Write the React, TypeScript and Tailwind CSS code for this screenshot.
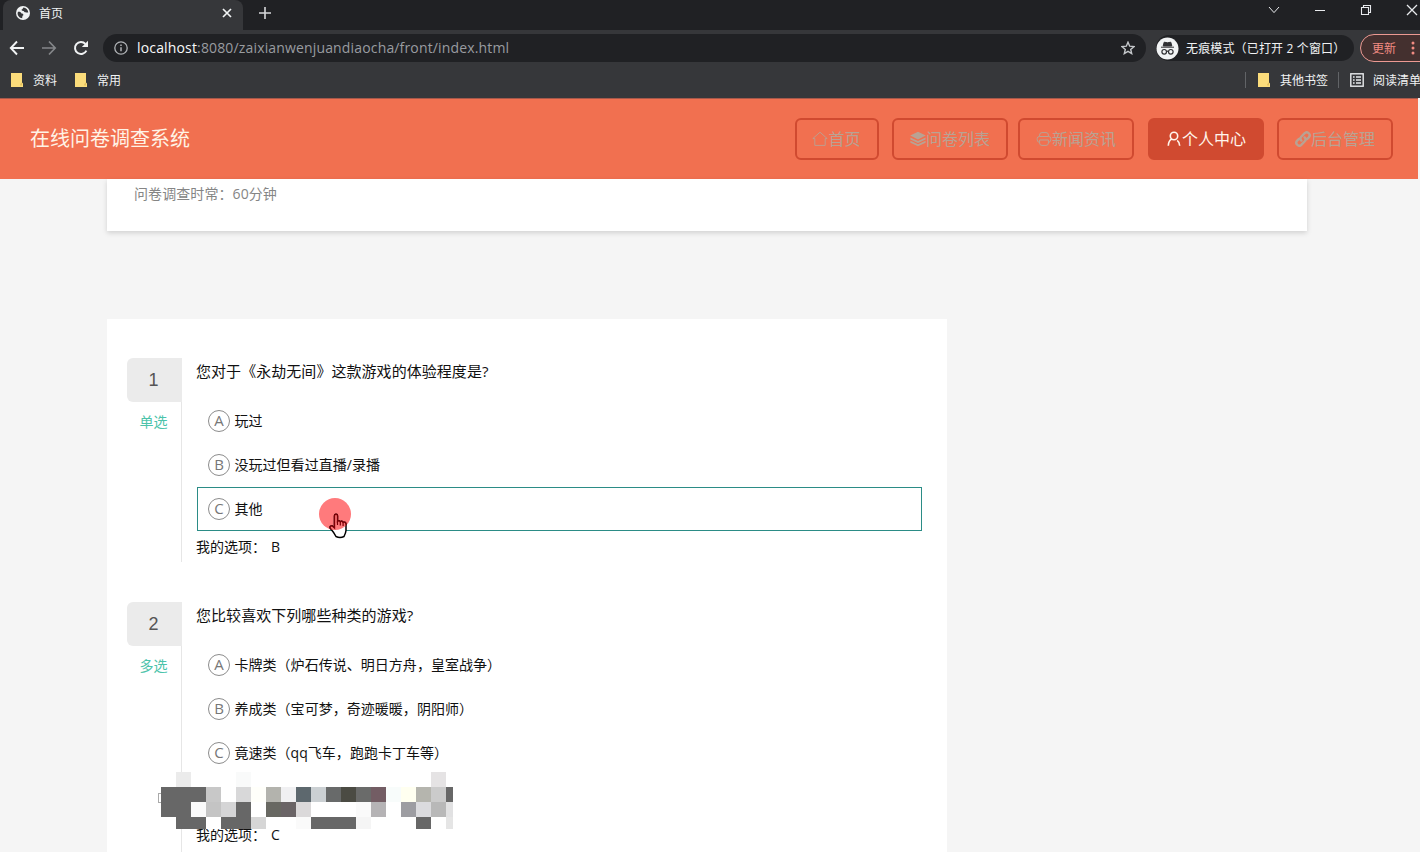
import React from "react";

const MOSAIC: string[][] = [
  ["", "#ebebeb", "", "", "", "#f9fafa", "", "", "", "", "", "", "", "", "", "", "", "", "#e5e3e4", ""],
  ["#676767", "#676767", "#676767", "#c8c8c8", "#ffffff", "#d8d8d9", "#fffffa", "#b3b3ad", "#f0f0f2", "#5d686e", "#cbd0d3", "#686a6a", "#4b4b43", "#6a6b6a", "#735d64", "#f8fcfb", "#fffff0", "#b5b5ae", "#cbcbcb", "#676767"],
  ["#676767", "#676767", "#fafafa", "#c4c4c4", "#d5d5d6", "#676767", "#ffffff", "#686862", "#6a6466", "#dbd9da", "#ffffff", "#ffffff", "#ffffff", "#fafafa", "#b5b3b5", "#ffffff", "#9d9da2", "#dbdbde", "#b8b8b8", "#e1e1e2"],
  ["", "#676767", "#676767", "#ffffff", "#676767", "#676767", "#d6d6d6", "", "", "#fafafa", "#676767", "#676767", "#676767", "#f5f5f5", "", "", "", "#676767", "", "#e5e5e5"],
];

const Folder = () => (
  <svg width="12" height="14" viewBox="0 0 12 14" className="shrink-0">
    <path d="M0 0H11V9.5L12 10.5V14H0Z" fill="#fbdc7b" />
    <path d="M9.2 11L11 9.5V12.5H9.2Z" fill="#e3bf5c" />
  </svg>
);

const Globe = () => (
  <svg width="14" height="14" viewBox="0 0 14 14" className="shrink-0">
    <circle cx="7" cy="7" r="7" fill="#f1f3f4" />
    <path d="M2 5.8C4 5.6 5.1 6.3 5.4 7.6C6.8 7.6 7.5 8.2 7.4 9.3C6.4 9.6 6.3 10.6 6.2 12.3C3.4 12 1.5 9.6 1.6 7Z" fill="#36373a" />
    <path d="M7.4 1.6C6.7 2.6 6.7 3.2 5.6 3.6C5.4 4.6 6.2 5 7.5 4.9C8.1 5.2 8.2 6.3 9.4 6.3C10.2 6.4 10.7 6.8 12.3 6.4C12 3.7 10 1.7 7.4 1.6Z" fill="#36373a" />
  </svg>
);

const HomeIcon = () => (
  <svg width="16" height="16" viewBox="0 0 16 16" fill="none" stroke="currentColor" strokeWidth="0.9">
    <path d="M0.8 7.6L8 1.2L15.2 7.6H13.2V14.4H2.8V7.6Z" />
  </svg>
);
const LayersIcon = () => (
  <svg width="16" height="16" viewBox="0 0 16 16" fill="currentColor">
    <path d="M8 0.8L15.8 4.6L8 8.4L0.2 4.6Z" />
    <path d="M0.4 6.4L8 10L15.6 6.4V8.4L8 12L0.4 8.4Z" />
    <path d="M0.4 9.8L8 13.2L15.6 9.8V11.8L8 15.2L0.4 11.8Z" />
  </svg>
);
const NewsIcon = () => (
  <svg width="16" height="16" viewBox="0 0 16 16" fill="none" stroke="currentColor" strokeWidth="1">
    <path d="M3.6 5.5V4Q3.6 1.6 6 1.6H10Q12.4 1.6 12.4 4V5.5M3.6 11.4Q1.2 11.2 1.2 8.8V7.6Q1.2 5.5 3.4 5.5H12.6Q14.8 5.5 14.8 7.6V8.8Q14.8 11.2 12.4 11.4M3.6 9H12.4V12Q12.4 14.4 10 14.4H6Q3.6 14.4 3.6 12Z" />
  </svg>
);
const UserIcon = () => (
  <svg width="16" height="16" viewBox="0 0 16 16" fill="none" stroke="currentColor" strokeWidth="1.6">
    <circle cx="8" cy="5" r="3.7" />
    <path d="M5.9 8.1C3.8 9 2.5 11 2.3 14.7M11.2 9.3C12.8 10.4 13.6 12 13.7 14.7" />
  </svg>
);
const LinkIcon = () => (
  <svg width="16" height="16" viewBox="0 0 16 16" fill="none" stroke="currentColor" strokeWidth="2.4" strokeLinecap="round">
    <path d="M6.4 9.6A2.9 2.9 0 0 1 6.4 5.5L9.7 2.2A2.9 2.9 0 0 1 13.8 6.3L12 8.1M9.6 6.4A2.9 2.9 0 0 1 9.6 10.5L6.3 13.8A2.9 2.9 0 0 1 2.2 9.7L4 7.9" />
  </svg>
);

function NavItem({ icon, label, className }: { icon: React.ReactNode; label: string; className: string }) {
  return (
    <a className={"flex h-[42px] items-center justify-center rounded-[6px] border-2 border-[#d04a30] text-[16px] leading-[22px] " + className}>
      {icon}
      <span>{label}</span>
    </a>
  );
}

function Option({ letter, text, active }: { letter: string; text: string; active?: boolean }) {
  return (
    <div className={"flex h-11 items-center border pl-[10px] " + (active ? "border-[#2b8c86]" : "border-transparent")}>
      <span className="flex size-[22px] items-center justify-center rounded-full border border-[#8c8c8c] pb-[2px] text-[15px] leading-[18px] text-[#777]">
        {letter}
      </span>
      <span className="ml-[4.5px] text-[14px] leading-5 tracking-[0.03px] whitespace-nowrap text-[#111]">{text}</span>
    </div>
  );
}

function Question({ no, kind, title, children, className }: { no: number; kind: string; title: string; children: React.ReactNode; className: string }) {
  return (
    <section className={"flex " + className}>
      <div className="w-[55px] shrink-0 border-r border-[#e6e6e6] text-center">
        <div className="-mr-px flex h-11 items-center justify-center rounded-l-[6px] bg-[#ebebeb] pr-[2px] font-['Liberation_Sans','Noto_Sans_CJK_SC',sans-serif] text-[18px] text-[#555]">{no}</div>
        <div className="mt-[10px] pr-px text-[14px] leading-5 text-[#4cc3aa]">{kind}</div>
      </div>
      <div className="ml-[15px] w-[725px]">
        <h2 className="-ml-px h-[41px] pt-[2px] text-[15px] leading-[22px] tracking-[0.05px] whitespace-nowrap text-[#111]">{title}</h2>
        {children}
      </div>
    </section>
  );
}

export default function App() {
  return (
    <div className="relative flex h-[852px] w-[1420px] flex-col overflow-hidden bg-[#f5f5f5] font-['Open_Sans','Noto_Sans_CJK_SC',sans-serif]">
      <div className="flex h-[98px] shrink-0 flex-col bg-[#36373a]">
        <div className="flex h-[30px] shrink-0 bg-[#202124]">
          <div className="ml-[3px] flex w-[240px] items-center rounded-t-[8px] bg-[#36373a] pb-1 pl-[13px]">
            <Globe />
            <span className="mt-px ml-[9px] text-[12px] leading-4 text-[#f1f3f4]">首页</span>
            <svg className="mr-[11px] ml-auto" width="10" height="10" viewBox="0 0 10 10" stroke="#f1f3f4" strokeWidth="1.7"><path d="M1 1L9 9M9 1L1 9" /></svg>
          </div>
          <svg className="mt-[7px] ml-4" width="12" height="12" viewBox="0 0 12 12" stroke="#d6d8da" strokeWidth="1.6"><path d="M6 0V12M0 6H12" /></svg>
          <div className="mr-px ml-auto flex h-5 items-center text-[#e8eaed]">
            <svg width="12" height="12" viewBox="0 0 12 12" fill="none" stroke="currentColor" strokeWidth="1"><path d="M1 3L6 8.6L11 3" /></svg>
            <svg className="ml-[34px]" width="12" height="12" viewBox="0 0 12 12" stroke="currentColor"><path d="M1 6.5H11" /></svg>
            <svg className="ml-[34px]" width="12" height="12" viewBox="0 0 12 12" fill="none" stroke="currentColor" strokeWidth="1.1"><path d="M1.5 3.5H8.5V10.5H1.5ZM3.5 3.5V1.5H10.5V8.5H8.5" /></svg>
            <svg className="ml-[34px]" width="13" height="12" viewBox="0 0 13 12" stroke="currentColor" strokeWidth="1.3"><path d="M1 1L11 11M11 1L1 11" /></svg>
          </div>
        </div>
        <div className="flex h-9 shrink-0 items-center">
          <svg className="ml-[9px] shrink-0" width="16" height="16" viewBox="0 0 16 16" fill="none" stroke="#f1f3f4" strokeWidth="1.9"><path d="M15 8H2M8 1.5L1.8 8L8 14.5" /></svg>
          <svg className="ml-4 shrink-0" width="16" height="16" viewBox="0 0 16 16" fill="none" stroke="#85878a" strokeWidth="1.7"><path d="M1 8H14M8 1.5L14.2 8L8 14.5" /></svg>
          <svg className="ml-4 shrink-0" width="16" height="16" viewBox="0 0 16 16" fill="none" stroke="#f1f3f4" strokeWidth="2"><path d="M13.4 10.6A6 6 0 1 1 12.4 3.9" /><path d="M15 0.8V7H8.8Z" fill="#f1f3f4" stroke="none" /></svg>
          <div className="ml-[14px] flex h-7 w-[1043px] shrink-0 items-center rounded-full bg-[#202124] pl-[11px]">
            <svg width="14" height="14" viewBox="0 0 14 14" fill="none" stroke="#b0b3b6" strokeWidth="1.3"><circle cx="7" cy="7" r="6.2" /><path d="M7 6.2V10.3M7 3.5V5" strokeWidth="1.5" /></svg>
            <span className="ml-[9px] inline-block text-[14px] leading-5 tracking-[0.155px] text-[#999ca0]"><span className="text-[#f8f9fa]">localhost</span>:8080/zaixianwenjuandiaocha/front/index.html</span>
            <svg className="mr-[11px] ml-auto" width="14" height="14" viewBox="0 0 14 14" fill="none" stroke="#c5c8cb" strokeWidth="1.4"><path d="M7 1.2L8.7 5.2L13 5.6L9.7 8.4L10.7 12.6L7 10.4L3.3 12.6L4.3 8.4L1 5.6L5.3 5.2Z" /></svg>
          </div>
          <div className="ml-[10px] flex h-[26px] w-[198px] shrink-0 items-center rounded-full bg-[#202124]">
            <svg width="23" height="23" viewBox="0 0 23 23" className="shrink-0">
              <circle cx="11.5" cy="11.5" r="11" fill="#f1f3f4" />
              <path d="M8.2 5.2L11.5 5.8L14.8 5.2L15.8 9H7.2ZM5 10.2H18" stroke="#303134" strokeWidth="1" fill="#303134" />
              <g fill="none" stroke="#303134" strokeWidth="1.2"><circle cx="8.2" cy="14.8" r="2.3" /><circle cx="14.8" cy="14.8" r="2.3" /><path d="M10.4 14.5Q11.5 13.8 12.6 14.5" /></g>
            </svg>
            <span className="mt-px ml-[7px] text-[12px] leading-4 tracking-[0.15px] whitespace-nowrap text-[#f1f3f4]">无痕模式（已打开 2 个窗口）</span>
          </div>
          <div className="ml-[6px] flex h-7 w-20 shrink-0 items-center rounded-full border border-[#ec9a93] bg-[#44302f] pl-[11px] text-[12px] leading-4 text-[#f28b82]">
            <span className="mt-px">更新</span>
            <svg className="ml-[15px]" width="4" height="14" viewBox="0 0 4 14" fill="#f28b82"><circle cx="2" cy="2" r="1.5" /><circle cx="2" cy="7" r="1.5" /><circle cx="2" cy="12" r="1.5" /></svg>
          </div>
        </div>
        <div className="flex h-7 shrink-0 items-center text-[12px] leading-4 whitespace-nowrap text-[#f1f3f4]">
          <div className="ml-[11px] flex items-center gap-[10px]"><Folder /><span className="mt-[2px]">资料</span></div>
          <div className="ml-[18px] flex items-center gap-[10px]"><Folder /><span className="mt-[2px]">常用</span></div>
          <div className="ml-auto flex w-[175px] shrink-0 items-center">
            <span className="h-4 w-px shrink-0 bg-[#626467]" />
            <span className="ml-3 flex"><Folder /></span>
            <span className="mt-[2px] ml-[10px]">其他书签</span>
            <span className="ml-[10px] h-4 w-px shrink-0 bg-[#626467]" />
            <svg className="ml-[11px] shrink-0" width="14" height="14" viewBox="0 0 14 14" fill="none" stroke="#e8eaed" strokeWidth="1.4"><rect x="0.8" y="0.8" width="12.4" height="12.4" /><path d="M3 4H4.6M6 4H11M3 7H4.6M6 7H11M3 10H4.6M6 10H11" /></svg>
            <span className="mt-[2px] ml-[9px]">阅读清单</span>
          </div>
        </div>
      </div>

      <header className="mr-[2px] flex h-[81px] shrink-0 items-center border-t border-[#a8584a] bg-[#f17050] pl-[30px]">
        <h1 className="text-[20px] leading-7 text-[#fff3e6]">在线问卷调查系统</h1>
        <nav className="mr-[25px] ml-auto flex text-[#b9a293]">
          <NavItem icon={<HomeIcon />} label="首页" className="w-[84px] pr-px" />
          <NavItem icon={<LayersIcon />} label="问卷列表" className="ml-[13px] w-[116px]" />
          <NavItem icon={<NewsIcon />} label="新闻资讯" className="ml-[10px] w-[116px]" />
          <NavItem icon={<UserIcon />} label="个人中心" className="ml-[14px] w-[116px] bg-[#d04a30] text-[#fff5ec]" />
          <NavItem icon={<LinkIcon />} label="后台管理" className="ml-[13px] w-[116px]" />
        </nav>
      </header>

      <main className="flex min-h-0 flex-1 flex-col pl-[107px]">
        <div className="h-[52px] w-[1200px] shrink-0 bg-white pt-[5px] pl-[27px] text-[14px] leading-5 tracking-[0.08px] text-[#858585] shadow-[0_2px_5px_rgba(0,0,0,0.15)]">问卷调查时常：60分钟</div>
        <div className="mt-[88px] min-h-0 w-[840px] flex-1 overflow-hidden bg-white pt-[39px] pl-5">
          <Question no={1} kind="单选" title="您对于《永劫无间》这款游戏的体验程度是?" className="h-[204px]">
            <Option letter="A" text="玩过" />
            <Option letter="B" text="没玩过但看过直播/录播" />
            <Option letter="C" text="其他" active />
            <p className="mt-[6px] -ml-px text-[14px] leading-5 text-[#111]">我的选项：<span className="ml-[5px]">B</span></p>
          </Question>
          <Question no={2} kind="多选" title="您比较喜欢下列哪些种类的游戏?" className="mt-10 h-[260px]">
            <Option letter="A" text="卡牌类（炉石传说、明日方舟，皇室战争）" />
            <Option letter="B" text="养成类（宝可梦，奇迹暖暖，阴阳师）" />
            <Option letter="C" text="竟速类（qq飞车，跑跑卡丁车等）" />
            <div className="h-11" />
            <p className="mt-[6px] -ml-px text-[14px] leading-5 text-[#111]">我的选项：<span className="ml-[5px]">C</span></p>
          </Question>
        </div>
      </main>

      <div className="absolute top-[793px] left-[158px] h-[10px] w-[3px] border-y border-l border-[#aaa]" />
      <div className="absolute top-[772px] left-[161px] grid w-[292px] grid-cols-[repeat(19,15px)_7px] grid-rows-[15px_15px_15px_12px]">
        {MOSAIC.flatMap((row, r) => row.map((color, c) => <span key={r + "-" + c} style={{ backgroundColor: color || "transparent" }} />))}
      </div>
      <div className="absolute top-[498px] left-[319px] size-8 rounded-full bg-[#ff7a7c]" />
      <svg className="absolute top-[513px] left-[328px]" width="20" height="26" viewBox="0 0 20 26">
        <defs>
          <clipPath id="upper"><circle cx="7" cy="1" r="16" /></clipPath>
        </defs>
        <path d="M6.5 15V2.8A1.5 1.5 0 0 1 9.5 2.8V8.5Q11 6.9 12.3 8.8Q14 7.4 15 9.4Q17.8 8.4 18 11.5V17.5Q17.8 20 16 23.5Q12 25.4 8 23.5Q6 19.5 2.3 15.2Q1.5 12.6 4.3 13Z" fill="#fff" stroke="#000" strokeWidth="1.5" />
        <g clipPath="url(#upper)">
          <path d="M6.5 15V2.8A1.5 1.5 0 0 1 9.5 2.8V8.5Q11 6.9 12.3 8.8Q14 7.4 15 9.4Q17.8 8.4 18 11.5V17.5Q17.8 20 16 23.5Q12 25.4 8 23.5Q6 19.5 2.3 15.2Q1.5 12.6 4.3 13Z" fill="#ff7a7c" stroke="#7d0006" strokeWidth="1.4" />
          <path d="M9.5 8V12M12.3 9V12.5M15.1 9.5V13" stroke="#7d0006" strokeWidth="1.2" />
        </g>
      </svg>
    </div>
  );
}
